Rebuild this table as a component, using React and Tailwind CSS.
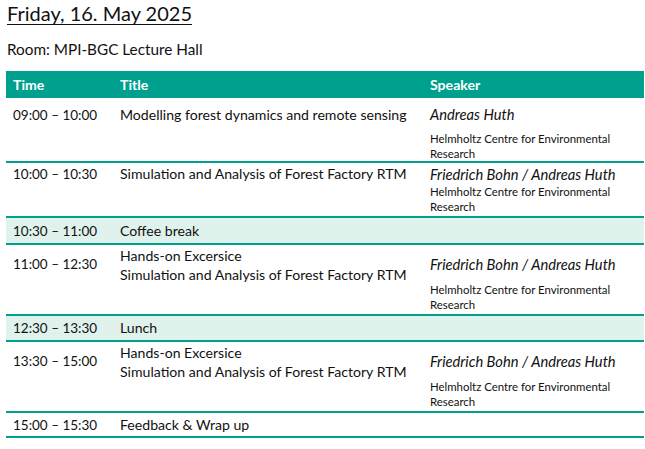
const font = { fontFamily: 'Lato, "Open Sans", sans-serif' }

function Inst() {
  return (
    <div className="text-[11.4px] leading-[15px] w-[190px]">
      Helmholtz Centre for Environmental Research
    </div>
  )
}

export default function App() {
  return (
    <div className="w-[645px] h-[449px] bg-white text-[#111] overflow-hidden" style={font}>
      <div className="pl-[7px] pt-[1px]">
        <h1 className="text-[20px] leading-[24px] underline underline-offset-[3px] decoration-1">Friday, 16. May 2025</h1>
        <p className="text-[15.3px] leading-[20px] mt-[14px]">Room: MPI-BGC Lecture Hall</p>
      </div>

      <div className="ml-[6px] mt-[12px] w-[638px] text-[14.1px]">
        {/* header */}
        <div className="flex h-[27px] items-center bg-[#00a08f] text-white font-bold">
          <div className="w-[107px] pl-[7px]">Time</div>
          <div className="w-[310px] pl-[7px]">Title</div>
          <div className="pl-[7px]">Speaker</div>
        </div>

        {/* 09:00 */}
        <div className="flex h-[65px] border-b-2 border-[#00a08f] leading-[18px]">
          <div className="w-[107px] pl-[7px] pt-[8px] text-[13.5px]">09:00 – 10:00</div>
          <div className="w-[310px] pl-[7px] pt-[8px]">Modelling forest dynamics and remote sensing</div>
          <div className="pl-[7px] pt-[7px]">
            <div className="italic text-[14.7px]">Andreas Huth</div>
            <div className="mt-[8px]"><Inst /></div>
          </div>
        </div>

        {/* 10:00 */}
        <div className="flex h-[55px] border-b-2 border-[#00a08f] leading-[18px]">
          <div className="w-[107px] pl-[7px] pt-[2px] text-[13.5px]">10:00 – 10:30</div>
          <div className="w-[310px] pl-[7px] pt-[2px]">Simulation and Analysis of Forest Factory RTM</div>
          <div className="pl-[7px] pt-[2px]">
            <div className="italic text-[14.7px]">Friedrich Bohn / Andreas Huth</div>
            <div className="mt-[1px]"><Inst /></div>
          </div>
        </div>

        {/* coffee */}
        <div className="flex h-[27px] items-center bg-[#dff3ec] border-b-2 border-[#00a08f] leading-[18px]">
          <div className="w-[107px] pl-[7px] text-[13.5px]">10:30 – 11:00</div>
          <div className="w-[310px] pl-[7px]">Coffee break</div>
        </div>

        {/* 11:00 */}
        <div className="flex h-[71px] border-b-2 border-[#00a08f] leading-[19px]">
          <div className="w-[107px] pl-[7px] pt-[10px] text-[13.5px]">11:00 – 12:30</div>
          <div className="w-[310px] pl-[7px] pt-[1px]">
            <div>Hands-on Excersice</div>
            <div>Simulation and Analysis of Forest Factory RTM</div>
          </div>
          <div className="pl-[7px] pt-[10px]">
            <div className="italic text-[14.7px]">Friedrich Bohn / Andreas Huth</div>
            <div className="mt-[8px]"><Inst /></div>
          </div>
        </div>

        {/* lunch */}
        <div className="flex h-[26px] items-center bg-[#dff3ec] border-b-2 border-[#00a08f] leading-[18px]">
          <div className="w-[107px] pl-[7px] text-[13.5px]">12:30 – 13:30</div>
          <div className="w-[310px] pl-[7px]">Lunch</div>
        </div>

        {/* 13:30 */}
        <div className="flex h-[71px] border-b-2 border-[#00a08f] leading-[19px]">
          <div className="w-[107px] pl-[7px] pt-[10px] text-[13.5px]">13:30 – 15:00</div>
          <div className="w-[310px] pl-[7px] pt-[1px]">
            <div>Hands-on Excersice</div>
            <div>Simulation and Analysis of Forest Factory RTM</div>
          </div>
          <div className="pl-[7px] pt-[10px]">
            <div className="italic text-[14.7px]">Friedrich Bohn / Andreas Huth</div>
            <div className="mt-[8px]"><Inst /></div>
          </div>
        </div>

        {/* feedback */}
        <div className="flex h-[25px] items-center border-b-2 border-[#00a08f] leading-[18px]">
          <div className="w-[107px] pl-[7px] text-[13.5px]">15:00 – 15:30</div>
          <div className="w-[310px] pl-[7px]">Feedback &amp; Wrap up</div>
        </div>
      </div>
    </div>
  )
}
